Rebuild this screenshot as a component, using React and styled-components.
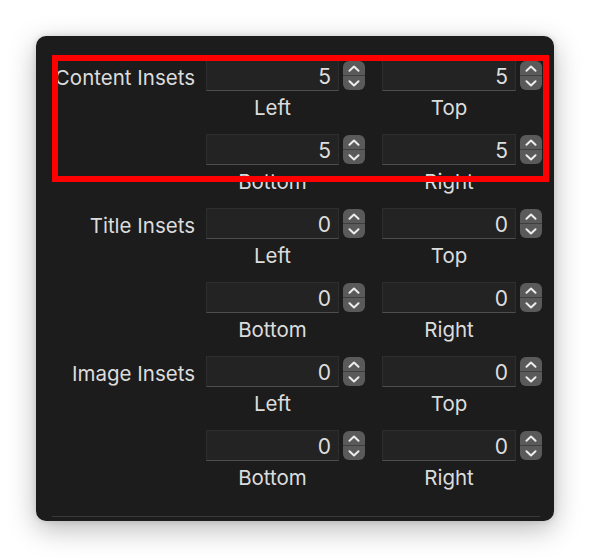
import React from "react";
import styled, { createGlobalStyle } from "styled-components";

const Global = createGlobalStyle`
  html, body { margin: 0; padding: 0; background: #ffffff; }
  body { font-family: Inter, "Liberation Sans", sans-serif; }
`;

const Page = styled.div`
  padding: 36px 36px 37px 36px;
`;

const Panel = styled.div`
  position: relative;
  width: 518px;
  height: 485px;
  box-sizing: border-box;
  background: #1c1c1c;
  border-radius: 10px;
  box-shadow: 0 8px 28px rgba(0, 0, 0, 0.28), 0 0 6px rgba(0, 0, 0, 0.12);
  padding-top: 24px;
  display: flex;
  flex-direction: column;
`;

const Group = styled.div`
  display: grid;
  grid-template-columns: 170px 176px 160px;
  grid-auto-rows: 74px;
`;

const GroupLabel = styled.div`
  height: 35px;
  padding-right: 11px;
  display: flex;
  align-items: center;
  justify-content: flex-end;
  color: #dcdcdc;
  font-size: 20.5px;
  white-space: nowrap;
`;

const Cell = styled.div`
  display: grid;
  grid-template-columns: ${(p) => p.$field}px 22px;
  grid-template-rows: 31px auto;
  column-gap: 4px;
  align-content: start;
`;

const Field = styled.div`
  height: 31px;
  box-sizing: border-box;
  background: #232323;
  border: 1px solid #2e2e2e;
  border-bottom-color: #4e4e4e;
  display: flex;
  align-items: center;
  justify-content: flex-end;
  padding-right: 7px;
  padding-top: 1px;
  color: #dedede;
  font-size: 21px;
`;

const Stepper = styled.div`
  width: 22px;
  height: 29px;
  margin-top: 1px;
  border-radius: 6px;
  background: #5a5a5a;
  display: flex;
  flex-direction: column;
  overflow: hidden;
`;

const StepHalf = styled.div`
  flex: 1;
  display: flex;
  align-items: center;
  justify-content: center;
  border-top: ${(p) => (p.$lower ? "1px solid #3e3e3e" : "none")};
`;

const Caption = styled.div`
  padding-top: 5px;
  line-height: 24px;
  text-align: center;
  color: #dcdcdc;
  font-size: 20.5px;
`;

const Divider = styled.div`
  margin: auto 14px 4px 16px;
  height: 1px;
  background: #3a3a3a;
`;

const Highlight = styled.div`
  position: absolute;
  left: 16px;
  top: 19px;
  width: 497px;
  height: 127px;
  box-sizing: border-box;
  border: 6px solid #ff0000;
  pointer-events: none;
`;

const Chevron = ({ up }) => (
  <svg width="12" height="7" viewBox="0 0 12 7">
    <polyline
      points={up ? "1.5,5.8 6,1.6 10.5,5.8" : "1.5,1.2 6,5.4 10.5,1.2"}
      fill="none"
      stroke="#ececec"
      strokeWidth="2"
      strokeLinecap="round"
      strokeLinejoin="round"
    />
  </svg>
);

const Spin = ({ value, caption, field }) => (
  <Cell $field={field}>
    <Field>{value}</Field>
    <Stepper>
      <StepHalf>
        <Chevron up />
      </StepHalf>
      <StepHalf $lower>
        <Chevron />
      </StepHalf>
    </Stepper>
    <Caption>{caption}</Caption>
  </Cell>
);

const groups = [
  { label: "Content Insets", v: 5 },
  { label: "Title Insets", v: 0 },
  { label: "Image Insets", v: 0 },
];

export default function App() {
  return (
    <>
      <Global />
      <Page>
        <Panel>
          {groups.map((g) => (
            <Group key={g.label}>
              <GroupLabel>{g.label}</GroupLabel>
              <Spin value={g.v} caption="Left" field={133} />
              <Spin value={g.v} caption="Top" field={134} />
              <div />
              <Spin value={g.v} caption="Bottom" field={133} />
              <Spin value={g.v} caption="Right" field={134} />
            </Group>
          ))}
          <Divider />
          <Highlight />
        </Panel>
      </Page>
    </>
  );
}
